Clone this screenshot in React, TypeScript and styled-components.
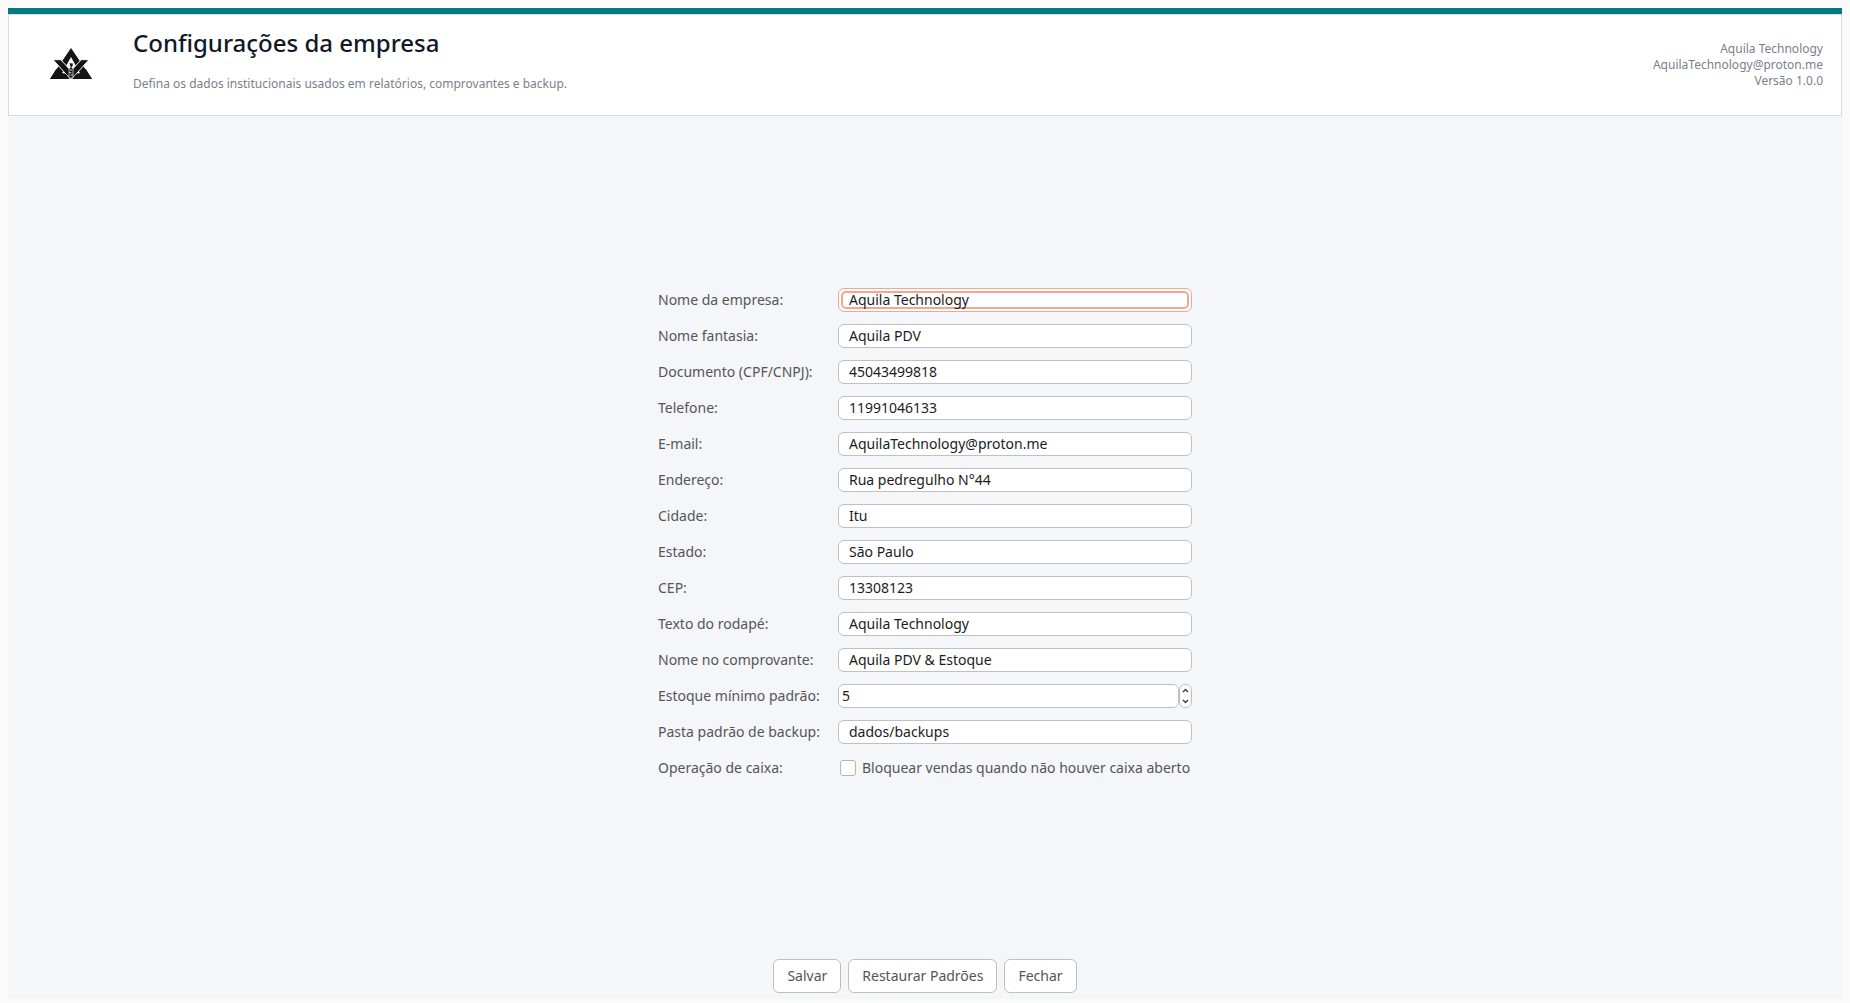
import React from "react";
import styled, { createGlobalStyle } from "styled-components";

const GlobalStyle = createGlobalStyle`
  * { box-sizing: border-box; }
  body {
    margin: 0;
    background: #fafafa;
    color: #555555;
    font: 14px/20px "Noto Sans", "Open Sans", sans-serif;
  }
  input, button { font: inherit; }
`;

const Page = styled.div`
  display: flex;
  flex-direction: column;
  min-height: 100vh;
  padding: 8px 8px 4px;
`;

const AccentBar = styled.div`
  height: 6px;
  background: #007a80;
`;

const Header = styled.header`
  display: flex;
  align-items: center;
  flex-wrap: wrap;
  min-height: 102px;
  padding: 0 18px 0 41px;
  border: 1px solid #d8dce2;
  background: #ffffff;
`;

const Logo = styled.svg`
  width: 42px;
  height: 31px;
  margin: 0 41px 3px 0;
`;

const Heading = styled.div`
  display: flex;
  flex: 1;
  flex-direction: column;
  gap: 15px;
  padding-bottom: 9px;
`;

const Title = styled.h1`
  margin: 0;
  color: #111827;
  font-size: 24px;
  font-weight: 500;
  line-height: 32px;
`;

const Subtitle = styled.p`
  margin: 0;
  color: #7b808c;
  font-size: 12px;
  line-height: 20px;
`;

const Contact = styled.address`
  color: #7b808c;
  font-size: 12px;
  font-style: normal;
  line-height: 16px;
  text-align: right;
`;

const Form = styled.form`
  display: flex;
  flex: 1;
  flex-direction: column;
  align-items: center;
  padding-bottom: 6px;
  background: #f4f6fa;
`;

const Fields = styled.div`
  display: grid;
  grid-template-columns: 164px 354px;
  grid-auto-rows: 24px;
  align-items: center;
  gap: 12px 16px;
  margin: auto 0;
  padding-bottom: 8px;
`;

const Label = styled.label`
  white-space: nowrap;
`;

const Frame = styled.div<{ $active?: boolean }>`
  position: relative;
  display: flex;
  height: 24px;
  border: 1px solid ${(p) => (p.$active ? "#f4a68f" : "#c0c0c0")};
  border-radius: 6px;
  background: #ffffff;

  &::before {
    content: "";
    display: ${(p) => (p.$active ? "block" : "none")};
    position: absolute;
    inset: 2px;
    border: 2px solid #f4a68f;
    border-radius: 5px;
  }
`;

const TextInput = styled.input`
  position: relative;
  width: 100%;
  min-width: 0;
  padding: 0 10px;
  border: 0;
  outline: none;
  background: transparent;
  color: #1c1c1c;
`;

const Spin = styled.div`
  display: flex;
`;

const NumberInput = styled.input`
  flex: 1;
  min-width: 0;
  height: 24px;
  padding: 0 3px;
  border: 1px solid #c0c0c0;
  border-radius: 6px;
  outline: none;
  background: #ffffff;
  color: #1c1c1c;
  appearance: textfield;
  &::-webkit-inner-spin-button { appearance: none; }
`;

const Stepper = styled.div`
  display: flex;
  flex-direction: column;
  width: 13px;
  height: 24px;
  border: 1px solid #c0c0c0;
  border-radius: 6px;
  background: #ffffff;
`;

const Step = styled.button`
  display: flex;
  flex: 1;
  align-items: center;
  justify-content: center;
  padding: 0;
  border: 0;
  background: transparent;
  color: #3d3d3d;
`;

const CheckLine = styled.label`
  display: flex;
  align-items: center;
  gap: 6px;
  padding-left: 2px;
  white-space: nowrap;
`;

const Checkbox = styled.input`
  width: 16px;
  height: 16px;
  margin: 0;
  border: 1px solid #b4b4b4;
  border-radius: 3px;
  background: #ffffff;
  appearance: none;
  &:checked { background: #e95420; }
`;

const Actions = styled.div`
  display: flex;
  gap: 7px;
`;

const Button = styled.button`
  height: 34px;
  padding: 0 13px;
  border: 1px solid #c0c0c0;
  border-radius: 6px;
  background: #ffffff;
  color: #555555;
`;

const textFields = [
  { id: "empresa", label: "Nome da empresa:", value: "Aquila Technology", active: true },
  { id: "fantasia", label: "Nome fantasia:", value: "Aquila PDV" },
  { id: "documento", label: "Documento (CPF/CNPJ):", value: "45043499818" },
  { id: "telefone", label: "Telefone:", value: "11991046133" },
  { id: "email", label: "E-mail:", value: "AquilaTechnology@proton.me" },
  { id: "endereco", label: "Endereço:", value: "Rua pedregulho N°44" },
  { id: "cidade", label: "Cidade:", value: "Itu" },
  { id: "estado", label: "Estado:", value: "São Paulo" },
  { id: "cep", label: "CEP:", value: "13308123" },
  { id: "rodape", label: "Texto do rodapé:", value: "Aquila Technology" },
  { id: "comprovante", label: "Nome no comprovante:", value: "Aquila PDV & Estoque" },
];

type FieldProps = { id: string; label: string; value: string; active?: boolean };

function TextField({ id, label, value, active }: FieldProps) {
  return (
    <>
      <Label htmlFor={id}>{label}</Label>
      <Frame $active={active}>
        <TextInput id={id} defaultValue={value} />
      </Frame>
    </>
  );
}

function Chevron({ up }: { up?: boolean }) {
  return (
    <svg width="7" height="5" viewBox="0 0 7 5" fill="none" stroke="currentColor" strokeWidth="1.4">
      <path d={up ? "M1 4 3.5 1.5 6 4" : "M1 1 3.5 3.5 6 1"} />
    </svg>
  );
}

function CompanyLogo() {
  return (
    <Logo viewBox="0 0 126 93" aria-label="Aquila">
      <path d="M63 0 126 93H0ZM63 27 36 76H90Z" fill="#141414" fillRule="evenodd" />
      <path d="M9 35H32L63 68 94 35H117L65 93H61Z" fill="#141414" stroke="#fff" strokeWidth="3" />
      <path d="M0 93 19 62 34 76H28V78H47L59 93ZM126 93 107 62 92 76H98V78H79L67 93Z" fill="#141414" />
      <path d="M57 45H69V54L65 58 69 63V90H57V63L61 58Z" fill="#141414" stroke="#fff" strokeWidth="2" />
      <path d="M60 66H66M58 74H64M62 81H68" stroke="#ddd" strokeWidth="3" />
    </Logo>
  );
}

export default function App() {
  const [stock, setStock] = React.useState(5);
  return (
    <Page>
      <GlobalStyle />
      <AccentBar />
      <Header>
        <CompanyLogo />
        <Heading>
          <Title>Configurações da empresa</Title>
          <Subtitle>Defina os dados institucionais usados em relatórios, comprovantes e backup.</Subtitle>
        </Heading>
        <Contact>
          Aquila Technology
          <br />
          AquilaTechnology@proton.me
          <br />
          Versão 1.0.0
        </Contact>
      </Header>
      <Form onSubmit={(e) => e.preventDefault()}>
        <Fields>
          {textFields.map((f) => (
            <TextField key={f.id} {...f} />
          ))}
          <Label htmlFor="estoque">Estoque mínimo padrão:</Label>
          <Spin>
            <NumberInput
              id="estoque"
              type="number"
              value={stock}
              onChange={(e) => setStock(Number(e.target.value))}
            />
            <Stepper>
              <Step type="button" aria-label="Aumentar" onClick={() => setStock(stock + 1)}>
                <Chevron up />
              </Step>
              <Step type="button" aria-label="Diminuir" onClick={() => setStock(stock - 1)}>
                <Chevron />
              </Step>
            </Stepper>
          </Spin>
          <TextField id="backup" label="Pasta padrão de backup:" value="dados/backups" />
          <Label htmlFor="caixa">Operação de caixa:</Label>
          <CheckLine>
            <Checkbox id="caixa" type="checkbox" />
            Bloquear vendas quando não houver caixa aberto
          </CheckLine>
        </Fields>
        <Actions>
          <Button type="submit">Salvar</Button>
          <Button type="reset">Restaurar Padrões</Button>
          <Button type="button">Fechar</Button>
        </Actions>
      </Form>
    </Page>
  );
}
